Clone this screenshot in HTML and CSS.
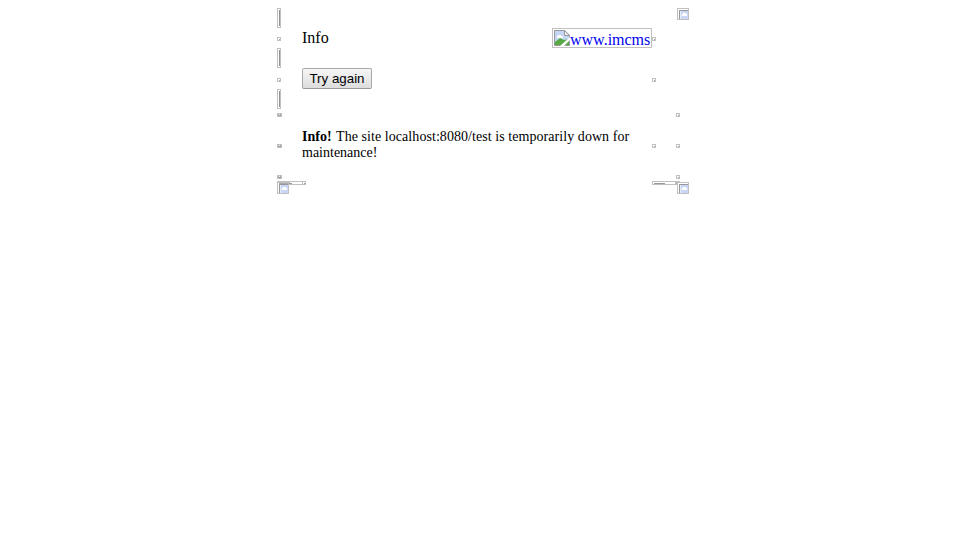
FILE: index.html
```
<!DOCTYPE html>
<html lang="en">
<head>
<meta charset="utf-8">
<title>Info</title>
<link rel="stylesheet" href="styles.css">
</head>
<body>
<svg class="defs" width="0" height="0">
<symbol id="dot" viewBox="0 0 4 4"><path fill="#c0c0c0" d="M0 0h4v4H0z"/><path fill="#fff" d="M1 1h2v2H1z"/><path fill="#aaa" d="M2 2h1v1H2z"/></symbol>
<symbol id="wide" viewBox="0 0 5 4"><path fill="#c0c0c0" d="M0 0h5v4H0z"/><path fill="#b2b2b2" d="M1 1h3v2H1z"/><path fill="#eee" d="M2 1h1v1H2z"/><path fill="#999" d="M2 2h2v1H2z"/></symbol>
<symbol id="tall" viewBox="0 0 4 20"><path fill="#c0c0c0" d="M0 0h4v20H0z"/><path fill="#fff" d="M1 1h2v18H1z"/><path fill="#929292" d="M2 2h1v16H2z"/></symbol>
<symbol id="pic" viewBox="0 0 12 12"><path fill="#c0c0c0" d="M0 0h12v12H0z"/><path fill="#fff" d="M1 1h10v10H1z"/><path fill="#999" d="M2 2h9v1H3v8H2z"/><path fill="#c7d7f5" d="M3 3h8v8H3z"/><path fill="#e8effb" d="M3 3h1v8H3z"/><path fill="#fff" d="M5 6h1V5h3v1h1v2H5z"/></symbol>
</svg>
<main class="panel">
<div class="cell"><svg class="tall"><use href="#tall"/></svg></div><div></div><div></div>
<div class="cell"><svg class="pic"><use href="#pic"/></svg></div>

<div class="cell drop-title"><svg class="dot"><use href="#dot"/></svg></div>
<div class="heading"><span class="title">Info</span><a class="logo" href="#"><svg class="broken" viewBox="0 0 16 16"><path fill="#c3d6f6" d="M0 0h11l5 5v11H0z"/><path fill="#fff" d="M3 7V6h1V5h3v1h2v2H3z"/><path fill="#58a846" d="M1 15v-3l5-4 4 2 5-1v6z"/><path fill="none" stroke="#999" d="M.5.5h10l5 5v10H.5z"/><path fill="#eee" stroke="#999" d="M10.5.5v5h5z"/><path fill="#fff" d="M6 16 16 7v3L10 16z"/></svg><span>www.imcms</span></a></div>
<div class="cell drop-title"><svg class="dot"><use href="#dot"/></svg></div><div></div>

<div class="cell"><svg class="tall"><use href="#tall"/></svg></div><div></div><div></div><div></div>

<div class="cell drop-button"><svg class="dot"><use href="#dot"/></svg></div>
<button class="retry" type="button">Try again</button>
<div class="cell drop-button"><svg class="dot"><use href="#dot"/></svg></div><div></div>

<div class="cell"><svg class="tall"><use href="#tall"/></svg></div><div></div><div></div><div></div>

<div class="cell drop-rule"><svg class="wide"><use href="#wide"/></svg></div><div></div><div></div>
<div class="cell drop-rule edge"><svg class="dot"><use href="#dot"/></svg></div>

<div class="cell drop-text"><svg class="wide"><use href="#wide"/></svg></div>
<p class="message"><b>Info!</b> <span class="spaced">The site localhost:8080/test is temporarily down for</span> maintenance!</p>
<div class="cell drop-text"><svg class="dot"><use href="#dot"/></svg></div>
<div class="cell drop-text edge"><svg class="dot"><use href="#dot"/></svg></div>

<div class="cell drop-rule"><svg class="wide"><use href="#wide"/></svg></div><div></div><div></div>
<div class="cell drop-rule edge"><svg class="dot"><use href="#dot"/></svg></div>

<div class="cell"><svg width="29" height="13" viewBox="0 0 29 13"><path fill="#c0c0c0" d="M0 0h29v4H0z"/><path fill="#fff" d="M13 1h12v2H13zM26 1h2v2h-2z"/><path fill="#999" d="M12 2h3v1h-3zM27 2h1v1h-1z"/><use href="#pic" y="1" width="12" height="12"/><path fill="#c0c0c0" d="M0 0h12v2H0z"/><path fill="#aaa" d="M2 2h9v1H2z"/></svg></div><div></div>
<div class="cell"><svg width="37" height="13" viewBox="0 0 37 13"><path fill="#c0c0c0" d="M0 0h28v4H0z"/><path fill="#fff" d="M1 1h22v2H1z"/><path fill="#999" d="M2 2h11v1H2z"/><path fill="#b2b2b2" d="M24 1h3v2h-3z"/><use href="#pic" x="25" y="1" width="12" height="12"/></svg></div><div></div>
</main>
</body>
</html>
```
FILE: styles.css
```
body {
  margin: 8px;
  background: #fff;
  color: #000;
  font: 16px "Liberation Serif", serif;
}
svg { display: block; overflow: visible; }
.defs { position: absolute; }
.panel {
  display: grid;
  grid-template-columns: 25px 350px 25px 12px;
  grid-template-rows: 20px 20px 20px 21px 20px 12px 50px 10px 13px;
  width: 412px;
  margin-left: 269px;
}
.dot { width: 4px; height: 4px; }
.wide { width: 5px; height: 4px; }
.tall { width: 4px; height: 20px; }
.pic { width: 12px; height: 12px; }
.drop-title { padding-top: 9px; }
.drop-button { padding-top: 10px; }
.drop-rule { padding-top: 4px; }
.drop-text { padding-top: 23px; }
.edge { margin-left: -1px; }
.heading { display: flex; justify-content: space-between; }
.title { line-height: 20px; }
.logo {
  display: flex;
  box-sizing: border-box;
  width: 100px;
  height: 20px;
  padding: 1px;
  border: 1px solid #c0c0c0;
  color: #0000ee;
  line-height: 20px;
  text-decoration: none;
}
.broken { width: 16px; height: 16px; flex: none; }
.retry {
  width: 70px;
  height: 21px;
  padding: 0;
  border: 1px solid #a9a9a9;
  border-bottom-color: #999;
  border-radius: 2px;
  background: linear-gradient(#f6f6f6, #ddd);
  color: #000;
  font: 13.33px "Liberation Sans", sans-serif;
}
.message {
  margin: 8px 0 0;
  font-size: 14px;
  line-height: 16px;
}
.spaced { margin-left: 1px; letter-spacing: 0.06px; }
```
